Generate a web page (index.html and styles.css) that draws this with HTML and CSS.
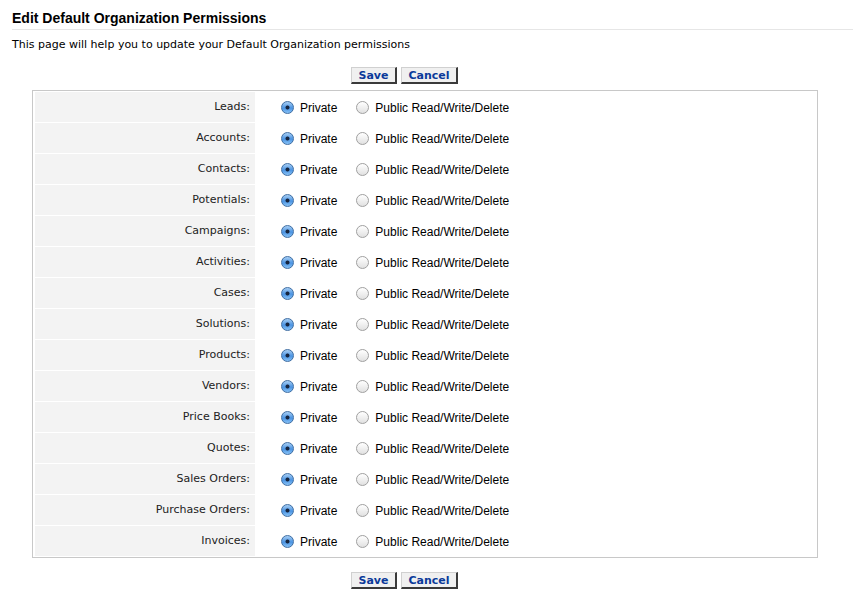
FILE: index.html
```html
<!DOCTYPE html>
<html>
<head>
<meta charset="utf-8">
<title>Edit Default Organization Permissions</title>
<link rel="stylesheet" href="styles.css">
</head>
<body>
<div class="page">
  <h1 class="title">Edit Default Organization Permissions</h1>
  <p class="desc">This page will help you to update your Default Organization permissions</p>
  <div class="actions">
    <button class="btn btn-save">Save</button>
    <button class="btn btn-cancel">Cancel</button>
  </div>
  <div class="perm-table">
    <div class="row"><div class="label">Leads:</div><div class="opts"><span class="radio on"></span><span class="opt">Private</span><span class="radio off"></span><span class="opt">Public Read/Write/Delete</span></div></div>
    <div class="row"><div class="label">Accounts:</div><div class="opts"><span class="radio on"></span><span class="opt">Private</span><span class="radio off"></span><span class="opt">Public Read/Write/Delete</span></div></div>
    <div class="row"><div class="label">Contacts:</div><div class="opts"><span class="radio on"></span><span class="opt">Private</span><span class="radio off"></span><span class="opt">Public Read/Write/Delete</span></div></div>
    <div class="row"><div class="label">Potentials:</div><div class="opts"><span class="radio on"></span><span class="opt">Private</span><span class="radio off"></span><span class="opt">Public Read/Write/Delete</span></div></div>
    <div class="row"><div class="label">Campaigns:</div><div class="opts"><span class="radio on"></span><span class="opt">Private</span><span class="radio off"></span><span class="opt">Public Read/Write/Delete</span></div></div>
    <div class="row"><div class="label">Activities:</div><div class="opts"><span class="radio on"></span><span class="opt">Private</span><span class="radio off"></span><span class="opt">Public Read/Write/Delete</span></div></div>
    <div class="row"><div class="label">Cases:</div><div class="opts"><span class="radio on"></span><span class="opt">Private</span><span class="radio off"></span><span class="opt">Public Read/Write/Delete</span></div></div>
    <div class="row"><div class="label">Solutions:</div><div class="opts"><span class="radio on"></span><span class="opt">Private</span><span class="radio off"></span><span class="opt">Public Read/Write/Delete</span></div></div>
    <div class="row"><div class="label">Products:</div><div class="opts"><span class="radio on"></span><span class="opt">Private</span><span class="radio off"></span><span class="opt">Public Read/Write/Delete</span></div></div>
    <div class="row"><div class="label">Vendors:</div><div class="opts"><span class="radio on"></span><span class="opt">Private</span><span class="radio off"></span><span class="opt">Public Read/Write/Delete</span></div></div>
    <div class="row"><div class="label">Price Books:</div><div class="opts"><span class="radio on"></span><span class="opt">Private</span><span class="radio off"></span><span class="opt">Public Read/Write/Delete</span></div></div>
    <div class="row"><div class="label">Quotes:</div><div class="opts"><span class="radio on"></span><span class="opt">Private</span><span class="radio off"></span><span class="opt">Public Read/Write/Delete</span></div></div>
    <div class="row"><div class="label">Sales Orders:</div><div class="opts"><span class="radio on"></span><span class="opt">Private</span><span class="radio off"></span><span class="opt">Public Read/Write/Delete</span></div></div>
    <div class="row"><div class="label">Purchase Orders:</div><div class="opts"><span class="radio on"></span><span class="opt">Private</span><span class="radio off"></span><span class="opt">Public Read/Write/Delete</span></div></div>
    <div class="row"><div class="label">Invoices:</div><div class="opts"><span class="radio on"></span><span class="opt">Private</span><span class="radio off"></span><span class="opt">Public Read/Write/Delete</span></div></div>
  </div>
  <div class="actions actions-bottom">
    <button class="btn btn-save">Save</button>
    <button class="btn btn-cancel">Cancel</button>
  </div>
</div>
</body>
</html>
```

FILE: styles.css
```css
html, body {
  margin: 0;
  padding: 0;
  background: #ffffff;
}

.page {
  width: 853px;
}

.title {
  margin: 0 0 0 12px;
  padding: 10px 0 3px 0;
  height: 16px;
  line-height: 16px;
  font-family: "Liberation Sans", Arial, sans-serif;
  font-size: 14px;
  font-weight: bold;
  color: #000000;
  border-bottom: 1px solid #e6e6e6;
}

.desc {
  margin: 8px 0 0 12px;
  line-height: 14px;
  font-family: "DejaVu Sans", Verdana, sans-serif;
  font-size: 11px;
  color: #000000;
}

.actions {
  display: flex;
  gap: 4px;
  margin-top: 15px;
  padding-left: 351px;
  height: 17px;
}

.actions-bottom {
  margin-top: 14px;
}

.btn {
  box-sizing: border-box;
  height: 17px;
  padding: 0;
  margin: 0;
  font-family: "DejaVu Sans", Verdana, sans-serif;
  font-size: 11px;
  font-weight: bold;
  line-height: 13px;
  color: #0b3a9a;
  background: #f0f0f0;
  border-style: solid;
  border-width: 1px 2px 2px 1px;
  border-color: #d0d0d0 #3a3a3a #3a3a3a #d0d0d0;
  text-align: center;
}

.btn-save {
  width: 46px;
}

.btn-cancel {
  width: 57px;
}

.perm-table {
  box-sizing: border-box;
  width: 786px;
  margin: 6px 0 0 32px;
  border: 1px solid #c8c8c8;
  padding: 1px 1px 1px 2px;
  display: flex;
  flex-direction: column;
  gap: 1px;
}

.row {
  display: grid;
  grid-template-columns: 220px 1fr;
  height: 30px;
}

.label {
  background: #f3f3f3;
  text-align: right;
  padding-right: 5px;
  line-height: 30px;
  font-family: "DejaVu Sans", Verdana, sans-serif;
  font-size: 11px;
  color: #222222;
}

.opts {
  display: flex;
  align-items: center;
  padding-left: 26px;
  padding-top: 1px;
  font-family: "Liberation Sans", Arial, sans-serif;
  font-size: 12px;
  color: #000000;
}

.radio {
  box-sizing: border-box;
  width: 13px;
  height: 13px;
  border-radius: 50%;
  flex: none;
  margin-top: -1px;
}

.radio.on {
  border: 1px solid #3f6ea3;
  background:
    radial-gradient(circle at 50% 50%, #16253f 0 1.6px, rgba(22,37,63,0) 2.4px),
    linear-gradient(#a8cff5, #4a93e2 55%, #86c1f6);
}

.radio.off {
  border: 1px solid #a0a0a0;
  background: linear-gradient(#ffffff, #e1e1e1);
}

.opt {
  margin-left: 6px;
  margin-right: 19px;
}
```
